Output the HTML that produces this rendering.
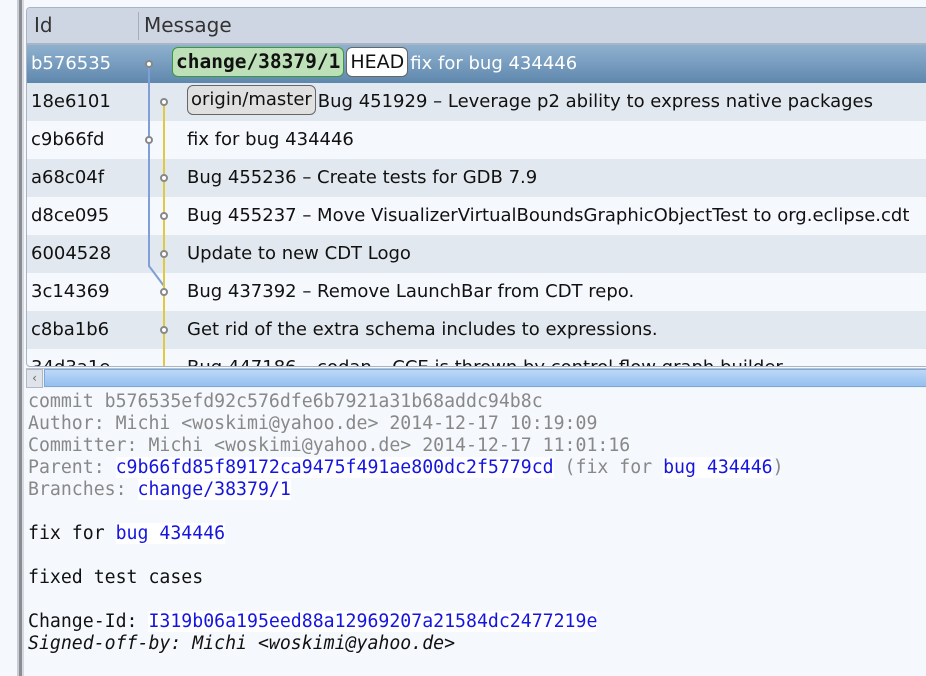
<!DOCTYPE html>
<html><head><meta charset="utf-8"><style>
*{margin:0;padding:0;box-sizing:border-box}
body{width:926px;height:676px;overflow:hidden;background:#f5f8fd;position:relative;font-family:"DejaVu Sans","Liberation Sans",sans-serif}
.bar{position:absolute;top:0;height:676px}
.tbl{position:absolute;left:26px;top:7px;width:910px;height:360px;border:1px solid #a9b3c2;border-radius:4px 0 0 4px;overflow:hidden;background:#f5f8fd}
.hdr{position:absolute;left:0;top:0;width:100%;height:37px;background:#cfd6e3;border-bottom:2px solid #aab4c4;font-size:20px;color:#333}
.row{position:absolute;left:0;width:100%;height:38px;font-size:18px;line-height:38px;color:#111;white-space:nowrap}
.row .id{position:absolute;left:4px}
.row .msg{position:absolute;left:160px}
.g{background:#e2e8ef}
.sel{background:linear-gradient(#8fb1cf,#5f87ad);color:#fff}
.tag{display:inline-block;border:1px solid #666;border-radius:6px;line-height:28px;font-size:19px;padding:0 3px;margin-right:2px;vertical-align:middle;position:relative;top:-2px}
.mono{position:absolute;left:28px;top:391px;font-family:"DejaVu Sans Mono","Liberation Mono",monospace;font-size:18.2px;line-height:22px;color:#888;white-space:pre}
.k{color:#111}
a{color:#1515e0;background:#fff;text-decoration:none}
</style></head><body>
<div class="bar" style="left:17px;width:2px;background:#c9ccd2"></div>
<div class="bar" style="left:19px;width:3px;background:#8a8d93"></div>
<div class="bar" style="left:22px;width:2px;background:#d6d9de"></div>
<div class="tbl">
 <div class="hdr"><span style="position:absolute;left:7px;top:5px">Id</span><span style="position:absolute;left:111px;top:4px;width:1px;height:28px;background:#aab"></span><span style="position:absolute;left:117px;top:5px">Message</span></div>
 <div class="row sel" style="top:37px"><span class="id">b576535</span><span class="msg" style="left:145px"><span class="tag" style="background:#bde0b8;border-color:#3a9a3a;color:#111;font-weight:bold;font-family:'DejaVu Sans Mono',monospace;font-size:19.5px">change/38379/1</span><span class="tag" style="background:#fff;color:#111">HEAD</span>fix for bug 434446</span></div>
 <div class="row g" style="top:75px"><span class="id">18e6101</span><span class="msg"><span class="tag" style="background:#e0e0e0;color:#111;font-size:18px">origin/master</span>Bug 451929 – Leverage p2 ability to express native packages</span></div>
 <div class="row" style="top:113px"><span class="id">c9b66fd</span><span class="msg">fix for bug 434446</span></div>
 <div class="row g" style="top:151px"><span class="id">a68c04f</span><span class="msg">Bug 455236 – Create tests for GDB 7.9</span></div>
 <div class="row" style="top:189px"><span class="id">d8ce095</span><span class="msg">Bug 455237 – Move VisualizerVirtualBoundsGraphicObjectTest to org.eclipse.cdt</span></div>
 <div class="row g" style="top:227px"><span class="id">6004528</span><span class="msg">Update to new CDT Logo</span></div>
 <div class="row" style="top:265px"><span class="id">3c14369</span><span class="msg">Bug 437392 – Remove LaunchBar from CDT repo.</span></div>
 <div class="row g" style="top:303px"><span class="id">c8ba1b6</span><span class="msg">Get rid of the extra schema includes to expressions.</span></div>
 <div class="row" style="top:341px"><span class="id">34d3a1e</span><span class="msg">Bug 447186 – codan – CCE is thrown by control flow graph builder</span></div>
 <svg style="position:absolute;left:0;top:0" width="300" height="360">
  <path d="M122 56 V258 L137 278" stroke="#7f9fd6" stroke-width="2" fill="none"/>
  <path d="M137 94 V360" stroke="#e0c840" stroke-width="2" fill="none"/>
  <g fill="#fff" stroke="#888" stroke-width="2">
   <circle cx="122" cy="56" r="3"/><circle cx="137" cy="94" r="3"/><circle cx="122" cy="132" r="3"/>
   <circle cx="137" cy="170" r="3"/><circle cx="137" cy="208" r="3"/><circle cx="137" cy="246" r="3"/>
   <circle cx="137" cy="284" r="3"/><circle cx="137" cy="322" r="3"/>
  </g>
 </svg>
</div>
<div style="position:absolute;left:26px;top:368px;width:900px;height:20px;background:#eef1f6;border-top:1px solid #b8c2d0">
 <div style="position:absolute;left:0;top:0;width:17px;height:19px;background:#dfe3ea;border:1px solid #b0b8c4;font-size:12px;color:#666;text-align:center;line-height:17px">‹</div>
 <div style="position:absolute;left:18px;top:0;width:890px;height:18px;background:linear-gradient(#bcd8f8,#94c0ef);border:1px solid #7ea8d8"></div>
</div>
<div class="mono">commit b576535efd92c576dfe6b7921a31b68addc94b8c
Author: Michi &lt;woskimi@yahoo.de&gt; 2014-12-17 10:19:09
Committer: Michi &lt;woskimi@yahoo.de&gt; 2014-12-17 11:01:16
Parent: <a>c9b66fd85f89172ca9475f491ae800dc2f5779cd</a> (fix for <a>bug 434446</a>)
Branches: <a>change/38379/1</a>
<span class="k">
fix for <a>bug 434446</a>

fixed test cases

Change-Id: <a>I319b06a195eed88a12969207a21584dc2477219e</a>
<i>Signed-off-by: Michi &lt;woskimi@yahoo.de&gt;</i></span></div>
</body></html>
